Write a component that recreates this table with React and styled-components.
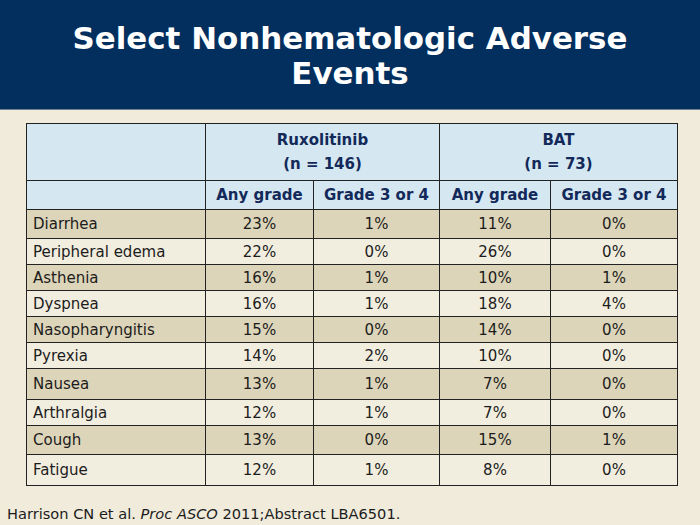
import React from "react";
import styled, { createGlobalStyle } from "styled-components";

const Global = createGlobalStyle`
  html, body { margin: 0; padding: 0; }
  body {
    background: #f0ebdb;
    font-family: "DejaVu Sans", Verdana, sans-serif;
    width: 700px;
    height: 525px;
    overflow: hidden;
  }
`;

const Page = styled.div`
  display: flex;
  flex-direction: column;
  width: 700px;
  height: 525px;
`;

const TitleBar = styled.header`
  background: #022f5e;
  height: 110px;
  box-sizing: border-box;
  padding-top: 21px;
  border-bottom: 1px solid #6f8194;
`;

const Title = styled.h1`
  margin: 0;
  color: #ffffff;
  font-family: "DejaVu Sans", Verdana, sans-serif;
  font-weight: bold;
  font-size: 30.9px;
  line-height: 35px;
  text-align: center;
`;

const Main = styled.main`
  padding: 13px 0 0 26px;
`;

const Table = styled.table`
  border-collapse: collapse;
  table-layout: fixed;
  width: 651px;
  border: 1px solid #222;
  font-size: 15px;
  color: #1c1c1c;
`;

const HeadCell = styled.th`
  background: #d5e8f1;
  color: #13295a;
  font-weight: bold;
  font-size: 15px;
  text-align: center;
  border: 1px solid #222;
  padding: 0;
  height: ${(p) => p.$h}px;
  line-height: ${(p) => p.$lh || 18}px;
  vertical-align: middle;
`;

const Row = styled.tr`
  background: ${(p) => (p.$dark ? "#dcd5b9" : "#f2eedf")};
  height: ${(p) => p.$h}px;
`;

const Cell = styled.td`
  border: 1px solid #222;
  padding: 0 ${(p) => (p.$label ? "6px" : "0")};
  text-align: ${(p) => (p.$label ? "left" : "center")};
  vertical-align: middle;
  white-space: nowrap;
`;

const Footer = styled.footer`
  margin-top: 19px;
  padding-left: 7px;
  font-family: "DejaVu Sans", sans-serif;
  font-size: 14.6px;
  line-height: 17px;
  color: #1c1c1c;
`;

const rows = [
  ["Diarrhea", "23%", "1%", "11%", "0%", 29],
  ["Peripheral edema", "22%", "0%", "26%", "0%", 26],
  ["Asthenia", "16%", "1%", "10%", "1%", 26],
  ["Dyspnea", "16%", "1%", "18%", "4%", 26],
  ["Nasopharyngitis", "15%", "0%", "14%", "0%", 26],
  ["Pyrexia", "14%", "2%", "10%", "0%", 26],
  ["Nausea", "13%", "1%", "7%", "0%", 31],
  ["Arthralgia", "12%", "1%", "7%", "0%", 26],
  ["Cough", "13%", "0%", "15%", "1%", 29],
  ["Fatigue", "12%", "1%", "8%", "0%", 31],
];

export default function App() {
  return (
    <>
      <Global />
      <Page>
        <TitleBar>
          <Title>
            Select Nonhematologic Adverse
            <br />
            Events
          </Title>
        </TitleBar>
        <Main>
          <Table>
            <colgroup>
              <col style={{ width: 179 }} />
              <col style={{ width: 108 }} />
              <col style={{ width: 126 }} />
              <col style={{ width: 111 }} />
              <col style={{ width: 127 }} />
            </colgroup>
            <thead>
              <tr>
                <HeadCell $h={56} />
                <HeadCell $h={56} $lh={24} colSpan={2}>
                  Ruxolitinib
                  <br />
                  (n = 146)
                </HeadCell>
                <HeadCell $h={56} $lh={24} colSpan={2}>
                  BAT
                  <br />
                  (n = 73)
                </HeadCell>
              </tr>
              <tr>
                <HeadCell $h={28} />
                <HeadCell $h={28}>Any grade</HeadCell>
                <HeadCell $h={28}>Grade 3 or 4</HeadCell>
                <HeadCell $h={28}>Any grade</HeadCell>
                <HeadCell $h={28}>Grade 3 or 4</HeadCell>
              </tr>
            </thead>
            <tbody>
              {rows.map(([name, a, b, c, d, h], i) => (
                <Row key={name} $dark={i % 2 === 0} $h={h}>
                  <Cell $label>{name}</Cell>
                  <Cell>{a}</Cell>
                  <Cell>{b}</Cell>
                  <Cell>{c}</Cell>
                  <Cell>{d}</Cell>
                </Row>
              ))}
            </tbody>
          </Table>
        </Main>
        <Footer>
          Harrison CN et al. <i>Proc ASCO</i> 2011;Abstract LBA6501.
        </Footer>
      </Page>
    </>
  );
}
